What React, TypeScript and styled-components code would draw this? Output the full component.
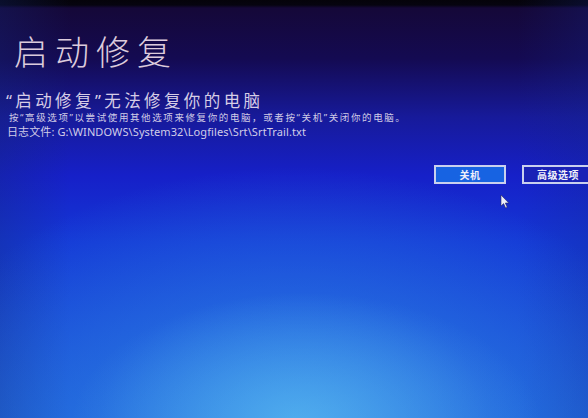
import React from "react"
import styled, { createGlobalStyle } from "styled-components"

const GlobalStyle = createGlobalStyle`
  html, body {
    margin: 0;
    padding: 0;
    background: #05030a;
  }
  #root {
    width: 588px;
    height: 418px;
  }
`

const Screen = styled.div`
  position: relative;
  width: 588px;
  height: 418px;
  overflow: hidden;
  font-family: "Noto Sans CJK SC", "Noto Sans", sans-serif;
  color: #d9d2e6;
  background:
    radial-gradient(ellipse 40% 32% at 52% 102%, rgba(110, 200, 245, 0.45) 0%, rgba(80, 170, 240, 0) 100%),
    radial-gradient(ellipse 66% 60% at 50% 100%, rgba(60, 160, 235, 0.85) 0%, rgba(45, 130, 230, 0.45) 50%, rgba(30, 100, 225, 0) 100%),
    linear-gradient(90deg, rgba(20, 40, 120, 0.3) 0%, rgba(20, 40, 120, 0) 12%, rgba(20, 40, 120, 0) 88%, rgba(20, 40, 140, 0.25) 100%),
    linear-gradient(180deg, #05030a 0px, #06040f 5px, #150838 8px, #140a52 14%, #171a9a 28%, #1620c8 42%, #1438d6 58%, #1e5ed8 100%);
`

const Content = styled.div`
  display: flex;
  flex-direction: column;
  padding: 28px 0 0 9px;
`

const Title = styled.h1`
  margin: 0 0 0 5px;
  font-size: 34px;
  font-weight: 300;
  line-height: 46px;
  letter-spacing: 7px;
  color: #dccbdc;
`

const Heading = styled.h2`
  margin: 18px 0 0 -3px;
  font-family: "Noto Sans", "Noto Sans CJK SC", sans-serif;
  font-size: 16.5px;
  font-weight: 400;
  line-height: 18px;
  letter-spacing: 3.4px;
  color: #d6cde6;
`

const Hint = styled.p`
  margin: 2px 0 0;
  font-family: "Noto Sans", "Noto Sans CJK SC", sans-serif;
  font-size: 9.5px;
  line-height: 12px;
  letter-spacing: 1.6px;
  color: #d0cbe6;
`

const LogLine = styled.p`
  margin: 1px 0 0 -2px;
  font-family: "Noto Sans", "Noto Sans CJK SC", sans-serif;
  font-size: 11px;
  line-height: 14px;
  letter-spacing: 0.1px;
  color: #d2cde8;
`

const ButtonRow = styled.div`
  display: flex;
  justify-content: flex-end;
  gap: 16px;
  margin-top: 26px;
  margin-right: -6px;
`

const Button = styled.button<{ $primary?: boolean }>`
  width: 72px;
  height: 19px;
  box-sizing: border-box;
  padding: 0;
  border: 2px solid #c9d0ee;
  background: ${(p) => (p.$primary ? "#1763e2" : "#1a22b6")};
  color: #f0f0fa;
  font-family: "Noto Sans CJK SC", sans-serif;
  font-size: 10px;
  font-weight: 700;
  letter-spacing: 0.5px;
  line-height: 15px;
  cursor: default;
`

const Pointer = styled.svg`
  position: absolute;
  left: 500px;
  top: 194px;
  width: 10px;
  height: 15px;
`

export default function App() {
  return (
    <>
      <GlobalStyle />
      <Screen>
        <Content>
          <Title>启动修复</Title>
          <Heading>“启动修复”无法修复你的电脑</Heading>
          <Hint>按“高级选项”以尝试使用其他选项来修复你的电脑，或者按“关机”关闭你的电脑。</Hint>
          <LogLine>日志文件: G:\WINDOWS\System32\Logfiles\Srt\SrtTrail.txt</LogLine>
          <ButtonRow>
            <Button $primary>关机</Button>
            <Button>高级选项</Button>
          </ButtonRow>
        </Content>
        <Pointer viewBox="0 0 10 15">
          <path d="M1 1 L1 12 L3.6 9.6 L5.6 14 L7.2 13.3 L5.3 9 L8.8 9 Z" fill="#eef0fa" stroke="#2a2a60" strokeWidth="0.6" />
        </Pointer>
      </Screen>
    </>
  )
}
